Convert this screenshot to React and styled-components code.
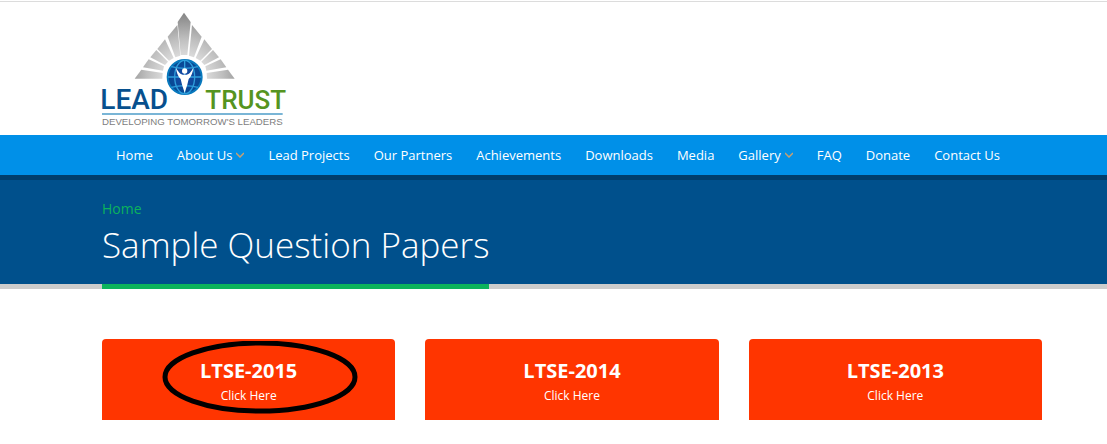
import React from "react";
import styled, { createGlobalStyle } from "styled-components";

const GlobalStyle = createGlobalStyle`
  * {
    box-sizing: border-box;
  }

  body {
    margin: 0;
    padding-top: 1px;
    background: #fff;
    font-family: "Open Sans", "Noto Sans", sans-serif;
    color: #fff;
  }
`;

const Container = styled.div`
  padding: 0 65px 0 102px;
`;

const Header = styled.header`
  padding-top: 8px;
  border-top: 1px solid #dcdcdc;
  background: #fff;
`;

const LogoLink = styled.a`
  display: block;
  width: 184px;
  height: 125px;
`;

const NavBar = styled.nav`
  background: #0090e8;
`;

const NavList = styled.ul`
  display: flex;
  height: 40px;
  margin: 0;
  padding: 0 2px;
  list-style: none;
`;

const NavLink = styled.a`
  display: flex;
  align-items: center;
  gap: 4px;
  height: 40px;
  padding: 0 12px;
  color: #fff;
  font-size: 13px;
  line-height: 20px;
  text-decoration: none;
  white-space: nowrap;
`;

const PageHeader = styled.section`
  padding-top: 18px;
  border-top: 5px solid #003e6c;
  background: linear-gradient(#ccc, #ccc) bottom / 100% 5px no-repeat #00508c;
`;

const Crumb = styled.a`
  display: block;
  width: fit-content;
  color: #0cb35c;
  font-size: 14px;
  line-height: 22px;
  text-decoration: none;
`;

const PageTitle = styled.h1`
  width: fit-content;
  margin: 0;
  padding-bottom: 14px;
  border-bottom: 5px solid #0cb35c;
  font-size: 35px;
  font-weight: 300;
  line-height: 50px;
  white-space: nowrap;
`;

const Cards = styled.main`
  display: grid;
  grid-template-columns: repeat(3, 1fr);
  gap: 30px;
  padding-top: 50px;
`;

const Card = styled.a`
  position: relative;
  padding: 18px 0 14px;
  border-radius: 4px 4px 0 0;
  background: #ff3500;
  color: #fff;
  text-align: center;
  text-decoration: none;
`;

const CardTitle = styled.h2`
  margin: 0;
  font-size: 20px;
  font-weight: 700;
  line-height: 28px;
`;

const CardText = styled.span`
  display: block;
  font-size: 12px;
  line-height: 21px;
`;

const Ring = styled.svg`
  position: absolute;
  top: 2px;
  left: 60px;
  width: 196px;
  height: 73px;
`;

const LogoDrawing = styled.svg`
  display: block;
  overflow: visible;
`;

const navItems = [
  { label: "Home" },
  { label: "About Us", menu: true },
  { label: "Lead Projects" },
  { label: "Our Partners" },
  { label: "Achievements" },
  { label: "Downloads" },
  { label: "Media" },
  { label: "Gallery", menu: true },
  { label: "FAQ" },
  { label: "Donate" },
  { label: "Contact Us" },
];

const papers = [
  { title: "LTSE-2015", marked: true },
  { title: "LTSE-2014" },
  { title: "LTSE-2013" },
];

const rays = [
  "300,75 329,110 306,172 291,167",
  "337,118 360,147 325,182 311,174",
  "363,150 381,172 337,195 328,185",
  "386,178 403,202 343,212 340,199",
  "408,209 428,236 345,236 344,219",
];

const Rays = () => rays.map((points) => <polygon key={points} points={points} />);

const Logo = () => (
  <LogoDrawing width="184" height="116" viewBox="30 30 552 348" role="img" aria-label="Lead Trust">
    <defs>
      <radialGradient id="ray" gradientUnits="userSpaceOnUse" cx="278" cy="230" r="190">
        <stop offset="0.25" stopColor="#e4e4e4" />
        <stop offset="0.6" stopColor="#bebebe" />
        <stop offset="1" stopColor="#858585" />
      </radialGradient>
      <radialGradient id="globe">
        <stop offset="0" stopColor="#1748a8" />
        <stop offset="1" stopColor="#064a92" />
      </radialGradient>
    </defs>
    <g fill="url(#ray)">
      <polygon points="276,38 296,66 286,165 266,165 257,66" />
      <Rays />
      <g transform="translate(556 0) scale(-1 1)">
        <Rays />
      </g>
    </g>
    <circle cx="278" cy="231" r="59" fill="#fff" />
    <circle cx="278" cy="231" r="51" fill="url(#globe)" stroke="#0878bd" strokeWidth="6" />
    <g fill="none" stroke="#2f9edb" strokeWidth="4">
      <ellipse cx="278" cy="231" rx="30" ry="50" />
      <path d="M278 181v100M228 231h100M238 200q40 10 80 0M238 262q40 -10 80 0" />
    </g>
    <circle cx="278" cy="213" r="8" fill="#fff" />
    <path d="M252 203q9 18 20 21h12q11-3 20-21q-2 22-14 34q-3 17-12 41q-9-24-12-41q-12-12-14-34z" fill="#fff" />
    <g fontFamily="Roboto, sans-serif" fontWeight="500">
      <text x="25" y="326" fontSize="84" fill="#07508e">LEAD</text>
      <text x="340" y="326" fontSize="78" fill="#559420">TRUST</text>
    </g>
    <path d="M30 342h542" stroke="#4c9cc9" strokeWidth="4" />
    <text x="30" y="375" fill="#7d7d7d" fontFamily="'Liberation Sans', sans-serif" fontSize="29">
      DEVELOPING TOMORROW'S LEADERS
    </text>
  </LogoDrawing>
);

const Chevron = () => (
  <svg width="8" height="6" viewBox="0 0 8 6" aria-hidden="true">
    <path d="M0 1l4 4 4-4" fill="none" stroke="#c9a070" strokeWidth="1.5" />
  </svg>
);

const App = () => (
  <>
    <GlobalStyle />
    <Header>
      <Container>
        <LogoLink href="#">
          <Logo />
        </LogoLink>
      </Container>
    </Header>
    <NavBar>
      <Container>
        <NavList>
          {navItems.map(({ label, menu }) => (
            <li key={label}>
              <NavLink href="#">
                {label}
                {menu && <Chevron />}
              </NavLink>
            </li>
          ))}
        </NavList>
      </Container>
    </NavBar>
    <PageHeader>
      <Container>
        <Crumb href="#">Home</Crumb>
        <PageTitle>Sample Question Papers</PageTitle>
      </Container>
    </PageHeader>
    <Container>
      <Cards>
        {papers.map(({ title, marked }) => (
          <Card key={title} href="#">
            <CardTitle>{title}</CardTitle>
            <CardText>Click Here</CardText>
            {marked && (
              <Ring viewBox="0 0 196 73" aria-hidden="true">
                <ellipse cx="98" cy="36" rx="95" ry="34" fill="none" stroke="#000" strokeWidth="5" />
              </Ring>
            )}
          </Card>
        ))}
      </Cards>
    </Container>
  </>
);

export default App;
